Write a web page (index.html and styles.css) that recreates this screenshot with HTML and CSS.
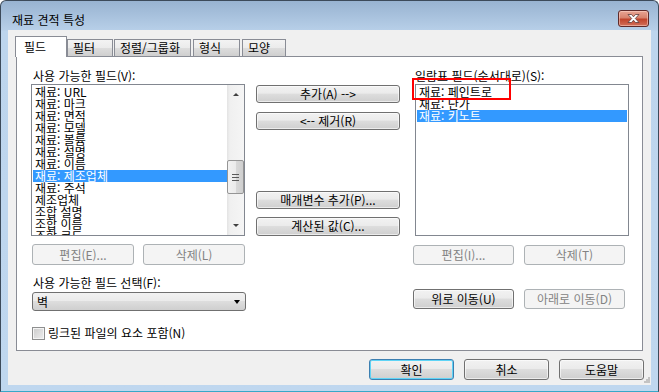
FILE: index.html
```html
<!DOCTYPE html>
<html lang="ko">
<head>
    <meta charset="UTF-8">
    <title>재료 견적 특성</title>
    <link rel="stylesheet" href="styles.css">
</head>
<body>
    <div class="window">
        <div class="titlebar">
            <span class="title">재료 견적 특성</span>
            <div class="close">
                <svg width="15" height="9" viewBox="0 0 15 9">
                    <path d="M2 0.5 L5.5 0.5 L7.5 2.8 L9.5 0.5 L13 0.5 L9.3 4.5 L13 8.5 L9.5 8.5 L7.5 6.2 L5.5 8.5 L2 8.5 L5.7 4.5 Z" fill="#fff" stroke="#5b3b3b" stroke-width="0.8"/>
                </svg>
            </div>
        </div>

        <div class="client">
            <div class="tabs">
                <div class="tab active">필드</div>
                <div class="tab t-filter">필터</div>
                <div class="tab t-sort">정렬/그룹화</div>
                <div class="tab t-format">형식</div>
                <div class="tab t-look">모양</div>
            </div>

            <div class="panel">
                <!-- 사용 가능한 필드 -->
                <div class="col col-left">
                    <div class="label">사용 가능한 필드(V):</div>
                    <div class="listbox">
                        <ul class="items">
                            <li>재료: URL</li>
                            <li>재료: 마크</li>
                            <li>재료: 면적</li>
                            <li>재료: 모델</li>
                            <li>재료: 볼륨</li>
                            <li>재료: 설명</li>
                            <li>재료: 이름</li>
                            <li class="selected">재료: 제조업체</li>
                            <li>재료: 주석</li>
                            <li>제조업체</li>
                            <li>조합 설명</li>
                            <li>조합 이름</li>
                            <li>조합 코드</li>
                        </ul>
                        <div class="scrollbar">
                            <span class="arrow-up"></span>
                            <div class="thumb"><span class="grip"></span></div>
                            <span class="arrow-down"></span>
                        </div>
                    </div>
                    <div class="btn-row">
                        <div class="btn disabled">편집(E)...</div>
                        <div class="btn disabled">삭제(L)</div>
                    </div>
                    <div class="label label-select">사용 가능한 필드 선택(F):</div>
                    <div class="combo">
                        <span>벽</span>
                        <span class="combo-arrow"></span>
                    </div>
                    <div class="check">
                        <span class="box"></span>
                        <span>링크된 파일의 요소 포함(N)</span>
                    </div>
                </div>

                <!-- 가운데 버튼 -->
                <div class="col col-mid">
                    <div class="btn btn-add">추가(A) --&gt;</div>
                    <div class="btn btn-remove">&lt;-- 제거(R)</div>
                    <div class="btn btn-param">매개변수 추가(P)...</div>
                    <div class="btn btn-calc">계산된 값(C)...</div>
                </div>

                <!-- 일람표 필드 -->
                <div class="col col-right">
                    <div class="label">일람표 필드(순서대로)(S):</div>
                    <div class="listbox listbox-right">
                        <ul class="items">
                            <li>재료: 페인트로</li>
                            <li>재료: 단가</li>
                            <li class="selected">재료: 키노트</li>
                        </ul>
                        <div class="highlight"></div>
                    </div>
                    <div class="btn-row">
                        <div class="btn disabled">편집(I)...</div>
                        <div class="btn disabled">삭제(T)</div>
                    </div>
                    <div class="btn-row btn-row-move">
                        <div class="btn">위로 이동(U)</div>
                        <div class="btn disabled">아래로 이동(D)</div>
                    </div>
                </div>
            </div>

            <div class="footer">
                <div class="btn default">확인</div>
                <div class="btn">취소</div>
                <div class="btn">도움말</div>
                <svg class="grip-corner" width="6" height="6" viewBox="0 0 6 6">
                    <rect x="4" y="0" width="2" height="2" fill="#c3c3c3"/>
                    <rect x="2" y="2" width="2" height="2" fill="#c3c3c3"/>
                    <rect x="4" y="2" width="2" height="2" fill="#c3c3c3"/>
                    <rect x="0" y="4" width="2" height="2" fill="#c3c3c3"/>
                    <rect x="2" y="4" width="2" height="2" fill="#c3c3c3"/>
                    <rect x="4" y="4" width="2" height="2" fill="#c3c3c3"/>
                </svg>
            </div>
        </div>
    </div>
</body>
</html>
```

FILE: styles.css
```css
body {
    margin: 0;
    font-family: 'Noto Sans CJK KR', 'Noto Sans', sans-serif;
    font-size: 12px;
    color: #000;
    background: #fff;
}
.window {
    width: 659px;
    height: 392px;
    box-sizing: border-box;
    border: 1px solid #3c4a5a;
    border-bottom-color: #37a8c8;
    border-radius: 6px 6px 0 0;
    background: linear-gradient(180deg, #98b3d1 0, #b7cfe8 29px, #bdd5ed 30px, #bfd7ef 100%);
    overflow: hidden;
}
.titlebar {
    height: 29px;
    display: flex;
    justify-content: space-between;
    align-items: flex-start;
}
.title {
    margin: 13px 0 0 11px;
    line-height: 12px;
}
.close {
    margin: 9px 9px 0 0;
    width: 29px;
    height: 15px;
    border: 1px solid #5e2a2a;
    border-radius: 3px;
    background: linear-gradient(180deg, #e8a493 0%, #d7826d 45%, #c0432b 55%, #d2705a 100%);
    box-shadow: inset 0 0 0 1px rgba(255, 220, 210, 0.5);
    display: flex;
    align-items: center;
    justify-content: center;
}
.client {
    position: relative;
    margin: 0 7px;
    height: 355px;
    box-sizing: border-box;
    padding: 6px 8px 5px 8px;
    background: #f0f0f0;
    display: flex;
    flex-direction: column;
}

/* tabs */
.tabs {
    display: flex;
    align-items: flex-end;
    height: 20px;
    margin-left: -1px;
    position: relative;
    z-index: 1;
}
.tab {
    box-sizing: border-box;
    height: 17px;
    padding: 1px 0 0 5px;
    line-height: 14px;
    border: 1px solid #898c95;
    border-bottom: none;
    background: linear-gradient(180deg, #f3f3f3 0%, #ebebeb 50%, #dddddd 50%, #cfcfcf 100%);
    white-space: nowrap;
}
.tab.active {
    width: 52px;
    height: 21px;
    margin-bottom: -1px;
    padding: 3px 0 0 8px;
    background: #fff;
}
.t-filter { width: 46px; }
.t-sort { width: 77px; margin-left: 1px; }
.t-format { width: 47px; margin-left: 2px; }
.t-look { width: 44px; margin-left: 2px; }

.panel {
    height: 295px;
    box-sizing: border-box;
    border: 1px solid #898c95;
    background: #fff;
    padding: 0 12px 0 14px;
    display: flex;
}
.col {
    display: flex;
    flex-direction: column;
}
.col-left { width: 215px; }
.col-mid { width: 144px; margin-left: 10px; }
.col-right { width: 216px; margin-left: 13px; }

.label {
    margin-top: 11px;
    padding-left: 2px;
    line-height: 16px;
    height: 16px;
    white-space: nowrap;
}
.label-select {
    margin-top: 9px;
    height: 18px;
    line-height: 18px;
}

/* list boxes */
.listbox {
    position: relative;
    width: 214px;
    height: 152px;
    box-sizing: border-box;
    border: 1px solid #828790;
    background: #fff;
    display: flex;
    overflow: hidden;
}
.listbox-right {
    margin-left: 2px;
    overflow: visible;
}
.items {
    list-style: none;
    margin: 0;
    padding: 1px 0 0 1px;
    flex: 1;
    overflow: hidden;
}
.listbox-right .items { padding-right: 1px; }
.items li {
    height: 12px;
    line-height: 12px;
    padding-left: 2px;
    white-space: nowrap;
}
.items li.selected {
    background: #3399ff;
    color: #fff;
}
.highlight {
    position: absolute;
    left: -4px;
    top: -7px;
    width: 95px;
    height: 18px;
    border: 2px solid #ff0000;
}

.scrollbar {
    width: 17px;
    position: relative;
    background: linear-gradient(90deg, #e3e3e3 0, #f0f0f0 3px, #f5f5f5 100%);
    display: flex;
    flex-direction: column;
    align-items: center;
}
.arrow-up, .arrow-down {
    width: 0;
    height: 0;
    border-left: 3px solid transparent;
    border-right: 3px solid transparent;
}
.arrow-up {
    margin-top: 8px;
    border-bottom: 3px solid #404040;
}
.arrow-down {
    margin-top: auto;
    margin-bottom: 8px;
    border-top: 3px solid #404040;
}
.thumb {
    position: absolute;
    top: 75px;
    left: 0;
    width: 15px;
    height: 32px;
    border: 1px solid #959595;
    border-radius: 2px;
    background: linear-gradient(90deg, #f2f2f2 0%, #ebebeb 50%, #d9d9d9 51%, #cfcfcf 100%);
    display: flex;
    align-items: center;
    justify-content: center;
}
.grip {
    width: 7px;
    height: 5px;
    border-top: 1px solid #5a5a5a;
    border-bottom: 1px solid #5a5a5a;
    background: linear-gradient(180deg, transparent 2px, #5a5a5a 2px, #5a5a5a 3px, transparent 3px);
}

/* buttons */
.btn {
    box-sizing: border-box;
    height: 18px;
    border: 1px solid #707070;
    border-radius: 3px;
    background: linear-gradient(180deg, #f2f2f2 0%, #ebebeb 45%, #dddddd 50%, #cfcfcf 100%);
    box-shadow: inset 0 0 0 1px rgba(255, 255, 255, 0.6);
    text-align: center;
    line-height: 16px;
    white-space: nowrap;
}
.btn.disabled {
    border-color: #adb2b5;
    background: #f4f4f4;
    box-shadow: none;
    color: #838383;
}
.btn.default {
    border-color: #3c7fb1;
    box-shadow: inset 0 0 0 1px #5fd4f6;
}
.col-mid .btn-add { margin-top: 28px; }
.col-mid .btn-remove { margin-top: 9px; }
.col-mid .btn-param { margin-top: 61px; }
.col-mid .btn-calc { margin-top: 8px; height: 19px; }

.btn-row {
    display: flex;
    gap: 9px;
    margin-top: 8px;
    padding-left: 1px;
}
.btn-row .btn {
    width: 102px;
    height: 21px;
    line-height: 19px;
}
.col-right .btn-row {
    margin-top: 9px;
    padding-left: 0;
    gap: 10px;
}
.col-right .btn-row .btn {
    width: 101px;
    height: 20px;
    line-height: 18px;
}
.col-right .btn-row-move { margin-top: 24px; }

.combo {
    margin-left: 1px;
    width: 214px;
    height: 19px;
    box-sizing: border-box;
    border: 1px solid #707070;
    border-radius: 3px;
    background: linear-gradient(180deg, #f2f2f2 0%, #ebebeb 45%, #dddddd 50%, #cfcfcf 100%);
    display: flex;
    align-items: center;
    justify-content: space-between;
    padding: 0 5px 0 4px;
    line-height: 17px;
}
.combo-arrow {
    width: 0;
    height: 0;
    border-left: 3.5px solid transparent;
    border-right: 3.5px solid transparent;
    border-top: 4px solid #000;
}
.check {
    margin-top: 15px;
    margin-left: 1px;
    display: flex;
    align-items: center;
    gap: 3px;
    line-height: 14px;
    white-space: nowrap;
}
.box {
    width: 13px;
    height: 13px;
    box-sizing: border-box;
    border: 1px solid #8e8f8f;
    background: linear-gradient(135deg, #cbcbcb 0%, #eeeeee 100%);
    box-shadow: inset 0 0 0 1px #f4f4f4;
}

.footer {
    margin-top: 8px;
    display: flex;
    justify-content: flex-end;
    gap: 10px;
    padding-right: -1px;
}
.footer .btn {
    width: 85px;
    height: 21px;
    line-height: 19px;
}
.footer .btn:last-of-type { margin-right: -1px; }
.grip-corner {
    position: absolute;
    right: 1px;
    bottom: 2px;
}
```
